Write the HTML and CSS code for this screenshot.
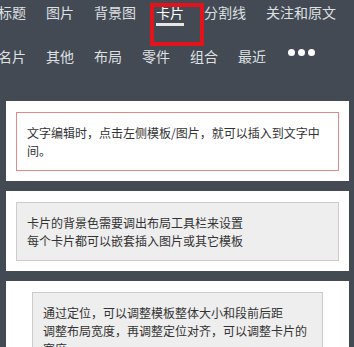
FILE: index.html
```html
<!DOCTYPE html>
<html lang="zh-CN">
<head>
<meta charset="utf-8">
<title>卡片</title>
<link rel="stylesheet" href="styles.css">
</head>
<body>
<div class="page">
  <nav class="nav">
    <div class="tabs tabs-main">
      <span class="tab">标题</span>
      <span class="tab">图片</span>
      <span class="tab">背景图</span>
      <span class="tab active"><span class="label">卡片</span></span>
      <span class="tab">分割线</span>
      <span class="tab">关注和原文</span>
    </div>
    <div class="tabs tabs-sub">
      <span class="tab">名片</span>
      <span class="tab">其他</span>
      <span class="tab">布局</span>
      <span class="tab">零件</span>
      <span class="tab">组合</span>
      <span class="tab">最近</span>
      <span class="more"><i class="dot"></i><i class="dot"></i><i class="dot"></i></span>
    </div>
    <div class="highlight"></div>
  </nav>
  <main class="content">
    <section class="panel">
      <div class="box box-red">文字编辑时，点击左侧模板/图片，就可以插入到文字中<br>间。</div>
    </section>
    <section class="panel">
      <div class="box box-gray">卡片的背景色需要调出布局工具栏来设置<br>每个卡片都可以嵌套插入图片或其它模板</div>
    </section>
    <section class="panel">
      <div class="box box-gray box-inset">通过定位，可以调整模板整体大小和段前后距<br>调整布局宽度，再调整定位对齐，可以调整卡片的宽度。</div>
    </section>
  </main>
</div>
</body>
</html>
```
FILE: styles.css
```css
html, body {
  margin: 0;
  padding: 0;
}
body {
  background: #434a54;
  font-family: "Noto Sans CJK SC", "Noto Sans", sans-serif;
  color: #333;
  overflow: hidden;
}
.page {
  width: 354px;
  height: 347px;
  overflow: hidden;
}
.nav {
  position: relative;
  overflow: hidden;
}
.tabs {
  display: flex;
  white-space: nowrap;
}
.tabs-main {
  margin-left: -12px;
  height: 44px;
}
.tabs-sub {
  margin-left: -12px;
  height: 24px;
  align-items: center;
}
.tab {
  flex: none;
  padding: 0 10px;
  font-size: 14px;
  line-height: 24px;
  color: #dfe0e3;
}
.tab.active {
  color: #ffffff;
}
.tab.active .label {
  display: inline-block;
  line-height: 22px;
  padding-top: 1px;
  border-bottom: 3px solid #e6e6e6;
}
.more {
  display: flex;
  gap: 3px;
  padding-left: 12px;
  margin-top: -7px;
}
.dot {
  display: block;
  width: 7px;
  height: 7px;
  border-radius: 50%;
  background: #ffffff;
}
.highlight {
  position: absolute;
  left: 150px;
  top: 3px;
  width: 54px;
  height: 43px;
  box-sizing: border-box;
  border: 4px solid #e3131b;
}
.content {
  padding: 33px 5px 0 6px;
}
.panel {
  background: #ffffff;
  padding: 11px 10px 10px;
  margin-bottom: 10px;
}
.box {
  font-size: 12px;
  line-height: 18px;
  padding: 11px 10px 10px;
}
.box-red {
  border: 1px solid #e08a8a;
  background: #ffffff;
}
.box-gray {
  border: 1px solid #cccccc;
  background: #eeeeee;
}
.box-inset {
  margin: 0 16px;
}
```
